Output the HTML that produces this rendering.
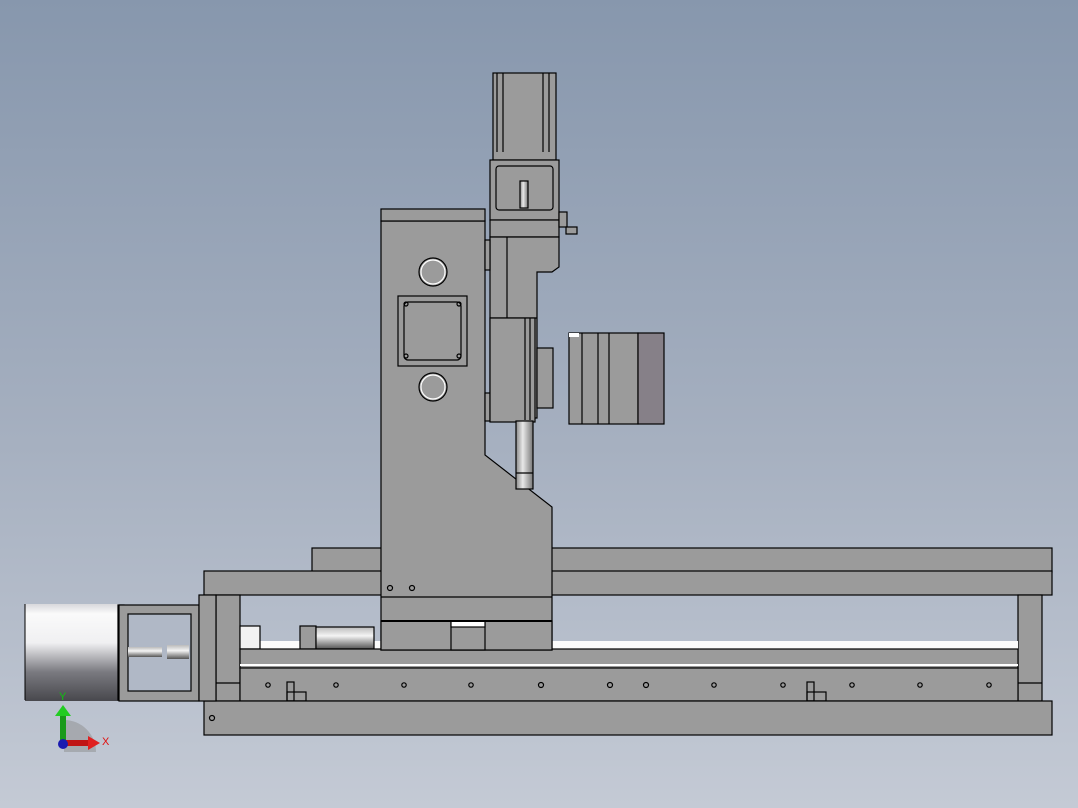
<!DOCTYPE html>
<html><head><meta charset="utf-8"><style>
html,body{margin:0;padding:0;width:1078px;height:808px;overflow:hidden}
body{background:linear-gradient(#8797ad 0%,#a6b0c0 55%,#c4cad5 100%);font-family:"Liberation Sans",sans-serif}
</style></head><body>
<svg width="1078" height="808" viewBox="0 0 1078 808" xmlns="http://www.w3.org/2000/svg">
<defs>
<linearGradient id="cyl" x1="0" y1="0" x2="0" y2="1">
<stop offset="0" stop-color="#d8d8dc"/><stop offset="0.1" stop-color="#fafafa"/><stop offset="0.4" stop-color="#f0f0f2"/><stop offset="0.7" stop-color="#7a7a80"/><stop offset="1" stop-color="#48484d"/></linearGradient>
<linearGradient id="rod" x1="0" y1="0" x2="1" y2="0">
<stop offset="0" stop-color="#8a8a8a"/><stop offset="0.4" stop-color="#e8e8e8"/><stop offset="1" stop-color="#777"/></linearGradient>
<linearGradient id="rodh" x1="0" y1="0" x2="0" y2="1">
<stop offset="0" stop-color="#bbb"/><stop offset="0.4" stop-color="#f4f4f4"/><stop offset="1" stop-color="#555"/></linearGradient>
</defs>
<g stroke="#000" stroke-width="1.2" fill="#9b9b9b">
<rect x="312" y="548" width="740" height="24"/>
<rect x="204" y="571" width="848" height="24"/>
<rect x="216" y="595" width="24" height="106"/>
<rect x="1018" y="595" width="24" height="106"/>
<line x1="216" y1="683" x2="240" y2="683"/><line x1="1018" y1="683" x2="1042" y2="683"/>
<rect x="240" y="641" width="778" height="8" fill="#fbfbfb" stroke="none"/>
<rect x="240" y="626" width="20" height="23" fill="#f2f2f2"/>
<rect x="300" y="626" width="16" height="23"/>
<rect x="316" y="627" width="58" height="22" fill="url(#rodh)"/>
<rect x="240" y="649" width="778" height="19"/>
<rect x="240" y="664" width="778" height="2" fill="#fff" stroke="none"/>
<rect x="240" y="668" width="778" height="33"/>
<rect x="287" y="682" width="7" height="19" fill="none"/><rect x="287" y="692" width="19" height="9" fill="none"/>
<rect x="807" y="682" width="7" height="19" fill="none"/><rect x="807" y="692" width="19" height="9" fill="none"/>
<rect x="204" y="701" width="848" height="34"/>
<path d="M381 221 H485 V455 L552 507 V650 H381 Z"/>
<rect x="381" y="209" width="104" height="12"/>
<line x1="381" y1="597" x2="552" y2="597"/>
<rect x="381" y="621" width="171" height="29" fill="#9b9b9b"/>
<rect x="451" y="621" width="34" height="29"/>
<rect x="451" y="621" width="34" height="6" fill="#fff"/>
<line x1="381" y1="621" x2="552" y2="621" stroke-width="2"/>
<circle cx="433" cy="272" r="14"/><circle cx="433" cy="272" r="12" fill="none" stroke="#fff"/>
<circle cx="433" cy="387" r="14"/><circle cx="433" cy="387" r="12" fill="none" stroke="#fff"/>
<rect x="398" y="296" width="69" height="70"/>
<rect x="404" y="302" width="57" height="58" rx="4" fill="none"/>
<circle cx="406" cy="304" r="2" fill="none"/><circle cx="459" cy="304" r="2" fill="none"/>
<circle cx="406" cy="356" r="2" fill="none"/><circle cx="459" cy="356" r="2" fill="none"/>
<rect x="493" y="73" width="63" height="87"/>
<line x1="497" y1="73" x2="497" y2="152"/><line x1="503" y1="73" x2="503" y2="152"/>
<line x1="543" y1="73" x2="543" y2="152"/><line x1="549" y1="73" x2="549" y2="152"/>
<rect x="490" y="160" width="69" height="60"/>
<rect x="496" y="166" width="57" height="44" rx="3" fill="none"/>
<rect x="520" y="181" width="8" height="27" fill="url(#rod)"/>
<rect x="490" y="220" width="69" height="17"/>
<rect x="559" y="212" width="8" height="15"/><rect x="566" y="227" width="11" height="7"/>
<path d="M490 237 H559 V267 L552 272 H537 V418 H490 Z"/>
<rect x="485" y="240" width="5" height="30"/>
<rect x="485" y="393" width="5" height="28"/>
<line x1="490" y1="318" x2="537" y2="318"/><line x1="507" y1="237" x2="507" y2="421"/>
<rect x="490" y="318" width="45" height="104"/>
<line x1="525" y1="318" x2="525" y2="420"/><line x1="530" y1="318" x2="530" y2="420"/>
<rect x="537" y="348" width="16" height="60"/>
<rect x="516" y="421" width="17" height="68" fill="url(#rod)"/>
<line x1="516" y1="473" x2="533" y2="473"/>
<rect x="569" y="333" width="69" height="91"/>
<rect x="569" y="333" width="10" height="4" fill="#fff" stroke="none"/>
<line x1="582" y1="333" x2="582" y2="424"/><line x1="598" y1="333" x2="598" y2="424"/><line x1="609" y1="333" x2="609" y2="424"/>
<rect x="638" y="333" width="26" height="91" fill="#868088"/>
<rect x="25" y="604" width="94" height="97" fill="url(#cyl)" stroke="none"/>
<line x1="25" y1="604" x2="25" y2="700" stroke-width="1"/>
<rect x="118" y="605" width="6" height="95"/>
<rect x="119" y="605" width="80" height="96"/>
<rect x="128" y="614" width="63" height="77" fill="#b0b8c6"/>
<rect x="128" y="647" width="34" height="10" fill="url(#rodh)" stroke="none"/>
<rect x="167" y="645" width="22" height="14" fill="url(#rodh)" stroke="none"/>
<rect x="199" y="595" width="17" height="106"/>
</g>
<g fill="none" stroke="#000" stroke-width="1.2">
<circle cx="390" cy="588" r="2.5"/><circle cx="412" cy="588" r="2.5"/>
<circle cx="212" cy="718" r="2.5"/>
<circle cx="268" cy="685" r="2.2"/><circle cx="336" cy="685" r="2.2"/><circle cx="404" cy="685" r="2.2"/><circle cx="471" cy="685" r="2.2"/>
<circle cx="541" cy="685" r="2.5"/><circle cx="610" cy="685" r="2.5"/><circle cx="646" cy="685" r="2.5"/><circle cx="714" cy="685" r="2.2"/>
<circle cx="783" cy="685" r="2.2"/><circle cx="852" cy="685" r="2.2"/><circle cx="920" cy="685" r="2.2"/><circle cx="989" cy="685" r="2.2"/>
</g>
<path d="M64 720 A32 32 0 0 1 96 752 H64 Z" fill="#8e8e8e" opacity="0.5"/>
<rect x="60" y="714" width="6" height="30" fill="#1a9a1a"/>
<path d="M55 716 L63 705 L71 716 Z" fill="#22cc22"/>
<rect x="64" y="740" width="26" height="6" fill="#c01515"/>
<path d="M88 736 L100 743 L88 750 Z" fill="#e02020"/>
<circle cx="63" cy="744" r="5" fill="#1a1ab0"/>
<text x="59" y="700" font-size="11" fill="#10c010" font-family="Liberation Sans,sans-serif">Y</text>
<text x="102" y="745" font-size="11" fill="#e01010" font-family="Liberation Sans,sans-serif">X</text>
</svg>
</body></html>
